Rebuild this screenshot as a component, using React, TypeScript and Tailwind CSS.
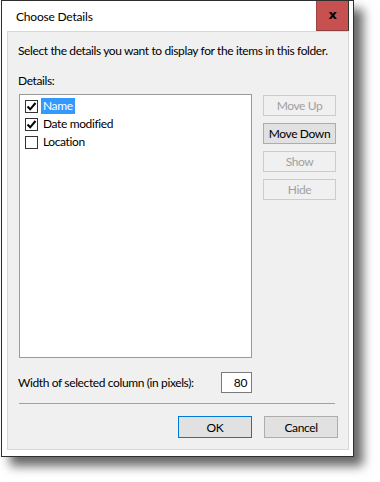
export default function App() {
  const rows = [
    { label: "Name", checked: true, selected: true },
    { label: "Date modified", checked: true, selected: false },
    { label: "Location", checked: false, selected: false },
  ];

  const sideButtons = [
    { label: "Move Up", enabled: false },
    { label: "Move Down", enabled: true },
    { label: "Show", enabled: false },
    { label: "Hide", enabled: false },
  ];

  return (
    <div className="w-[380px] h-[482px] bg-white font-['Lato',sans-serif] text-[12px] leading-[15px] tracking-[-0.38px] text-black whitespace-nowrap">
      <div className="ml-px w-[353px] h-[457px] border border-[#2e2e2e] bg-white shadow-[9px_9px_10px_rgba(0,0,0,0.6)] flex flex-col pl-[5px] pr-[4px]">
        {/* Title bar */}
        <div className="h-[30px] flex items-center justify-between">
          <span className="pl-[9px] tracking-[-0.2px]">Choose Details</span>
          <div className="w-[33px] h-[30px] -mt-px bg-[#c75050] border-l border-b border-l-[#a04545] border-b-[#8d4040] border-r border-r-[#333] flex items-center justify-center">
            <span className="font-['DejaVu_Sans',sans-serif] font-bold text-[13px] leading-none -mt-[2px]">x</span>
          </div>
        </div>

        {/* Content */}
        <div className="h-[419px] bg-[#f0f0f0] border border-[#d5d8dc] flex flex-col pl-[10px] pr-[10px]">
          <p className="mt-[11px]">Select the details you want to display for the items in this folder.</p>
          <p className="mt-[15px]">Details:</p>

          <div className="mt-[6px] flex">
            <div className="ml-px w-[233px] h-[264px] bg-white border border-[#9a9a9a] pl-[5px] pt-[2px]">
              {rows.map((r) => (
                <div key={r.label} className="h-[18px] flex items-center">
                  <span className="w-[13px] h-[13px] border border-[#333] bg-white flex items-center justify-center">
                    {r.checked && (
                      <svg width="11" height="11" viewBox="0 0 11 11">
                        <path d="M1.5 5.5 L4.2 8.3 L9.5 2" fill="none" stroke="#000" strokeWidth="2" />
                      </svg>
                    )}
                  </span>
                  <span
                    className={
                      r.selected
                        ? "ml-[3px] px-[2px] h-[16px] leading-[16px] bg-[#3399ff] text-white"
                        : "ml-[3px] px-[2px] h-[16px] leading-[16px]"
                    }
                  >
                    {r.label}
                  </span>
                </div>
              ))}
            </div>

            <div className="ml-[11px] pt-px flex flex-col gap-[7px]">
              {sideButtons.map((b) => (
                <div
                  key={b.label}
                  className={
                    b.enabled
                      ? "w-[73px] h-[21px] flex items-center justify-center border border-[#adadad] bg-[#e1e1e1]"
                      : "w-[73px] h-[21px] flex items-center justify-center border border-[#cccccc] text-[#a0a0a0]"
                  }
                >
                  {b.label}
                </div>
              ))}
            </div>
          </div>

          <div className="mt-[14px] ml-px w-[233px] flex items-center justify-between">
            <span className="-ml-px">Width of selected column (in pixels):</span>
            <div className="w-[31px] h-[21px] bg-white border border-[#7a7a7a] flex items-center justify-end pr-[4px]">80</div>
          </div>

          <div className="mt-[10px] ml-px w-[316px] h-px bg-[#a0a0a0]" />

          <div className="mt-[12px] flex justify-end gap-[12px]">
            <div className="w-[74px] h-[22px] flex items-center justify-center border border-[#0078d7] bg-[#e1e1e1]">OK</div>
            <div className="w-[74px] h-[22px] flex items-center justify-center border border-[#adadad] bg-[#e1e1e1]">Cancel</div>
          </div>
        </div>
      </div>
    </div>
  );
}
